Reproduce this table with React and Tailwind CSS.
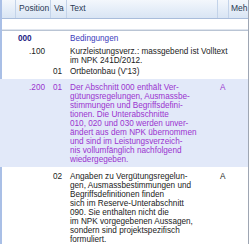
export default function App() {
  const font = { fontFamily: '"Liberation Sans", Arial, sans-serif' };
  return (
    <div className="w-[250px] h-[244px] overflow-hidden bg-white relative text-[8.2px] leading-[9px] whitespace-nowrap" style={font}>
      <div className="flex h-full">
        <div className="w-[2px] bg-[#a9bfe6]" />
        <div className="flex-1 flex flex-col min-w-0">
          {/* header */}
          <div className="flex h-[19px] bg-gradient-to-b from-[#f3f7fc] to-[#d9e5f4] border-b border-[#a9bddb] text-[#2a3a55] text-[8.5px]">
            <div className="w-[14px] border-r border-[#c3d3e9]" />
            <div className="w-[35px] border-r border-[#c3d3e9] pl-[3px] flex items-center">Position</div>
            <div className="w-[16px] border-r border-[#c3d3e9] pl-[3px] flex items-center">Va</div>
            <div className="w-[151px] border-r border-[#c3d3e9] pl-[3px] flex items-center">Text</div>
            <div className="w-[11px] border-r border-[#c3d3e9]" />
            <div className="flex-1 pl-[2px] flex items-center overflow-hidden">Meh</div>
          </div>
          <div className="h-[10px]" />
          <div className="h-[2px] border-t border-[#dfe5ee] border-b border-b-[#b9c4d4]" />
          {/* rows */}
          <div className="flex pt-[3px] h-[15px]">
            <div className="w-[14px]" />
            <div className="w-[35px] pl-[2px] font-bold text-[#1c1c84]">000</div>
            <div className="w-[16px]" />
            <div className="w-[151px] pl-[3px] text-[#3b3bbb]">Bedingungen</div>
          </div>
          <div className="flex pt-[1px] h-[21px] text-[#222]">
            <div className="w-[14px] shrink-0" />
            <div className="w-[35px] shrink-0 text-right pr-[6px]">.100</div>
            <div className="w-[16px] shrink-0" />
            <div className="pl-[3px]">Kurzleistungsverz.: massgebend ist Volltext<br />im NPK 241D/2012.</div>
          </div>
          <div className="flex h-[12px] text-[#222]">
            <div className="w-[14px]" />
            <div className="w-[35px]" />
            <div className="w-[16px] pl-[2px]">01</div>
            <div className="w-[151px] pl-[3px]">Ortbetonbau (V'13)</div>
          </div>
          <div className="flex h-[89px] pt-[4px] bg-[#e2e9f9] text-[#9a33cf] -ml-[2px] pl-[2px]">
            <div className="w-[14px]" />
            <div className="w-[35px] text-right pr-[6px]">.200</div>
            <div className="w-[16px] pl-[2px]">01</div>
            <div className="w-[151px] pl-[3px]">
              Der Abschnitt 000 enthält Ver-<br />
              gütungsregelungen, Ausmassbe-<br />
              stimmungen und Begriffsdefini-<br />
              tionen. Die Unterabschnitte<br />
              010, 020 und 030 werden unver-<br />
              ändert aus dem NPK übernommen<br />
              und sind im Leistungsverzeich-<br />
              nis vollumfänglich nachfolgend<br />
              wiedergegeben.
            </div>
            <div className="w-[11px] pl-[2px]">A</div>
          </div>
          <div className="flex pt-[5px] text-[#222]">
            <div className="w-[14px]" />
            <div className="w-[35px]" />
            <div className="w-[16px] pl-[2px]">02</div>
            <div className="w-[151px] pl-[3px]">
              Angaben zu Vergütungsregelun-<br />
              gen, Ausmassbestimmungen und<br />
              Begriffsdefinitionen finden<br />
              sich im Reserve-Unterabschnitt<br />
              090. Sie enthalten nicht die<br />
              im NPK vorgegebenen Aussagen,<br />
              sondern sind projektspezifisch<br />
              formuliert.
            </div>
            <div className="w-[11px] pl-[2px]">A</div>
          </div>
        </div>
        <div className="w-[1px] bg-[#9ea6b3]" />
        <div className="w-[1px] bg-white" />
      </div>
    </div>
  );
}
